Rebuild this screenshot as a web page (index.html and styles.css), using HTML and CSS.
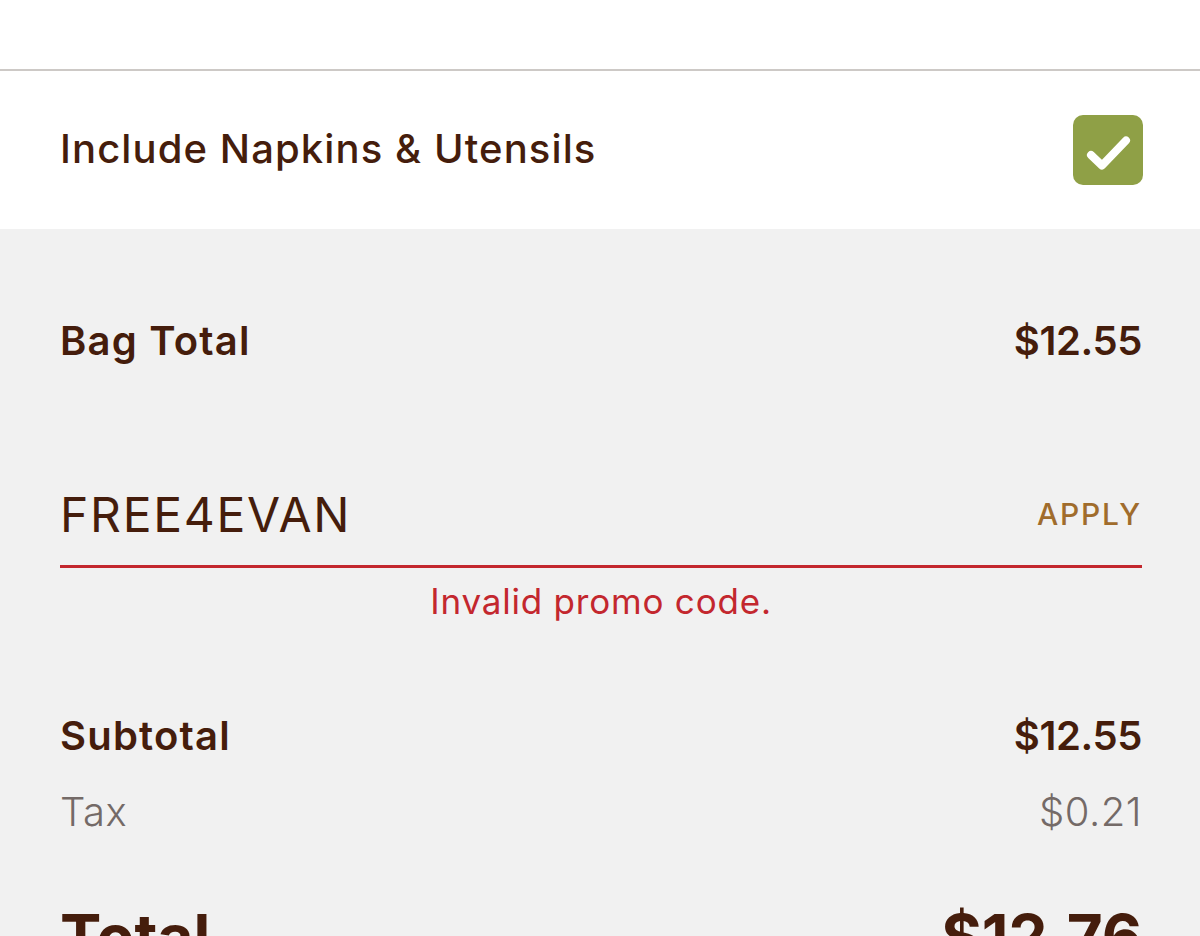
FILE: index.html
```html
<!DOCTYPE html>
<html>
<head>
<meta charset="utf-8">
<link rel="stylesheet" href="styles.css">
</head>
<body>
<div class="page">
  <div class="topbar"></div>
  <div class="napkins">
    <span class="napkins-label">Include Napkins &amp; Utensils</span>
    <span class="checkbox">
      <svg width="70" height="70" viewBox="0 0 70 70"><rect x="0" y="0" width="70" height="70" rx="10" fill="#8fa046"/><path d="M18 40 L29 50.5 L53 25.5" fill="none" stroke="#fff" stroke-width="8" stroke-linecap="round" stroke-linejoin="round"/></svg>
    </span>
  </div>
  <div class="summary">
    <div class="row bag">
      <span class="strong">Bag Total</span>
      <span class="strong price">$12.55</span>
    </div>
    <div class="promo">
      <div class="promo-field">
        <span class="promo-code">FREE4EVAN</span>
        <span class="apply">APPLY</span>
      </div>
      <div class="promo-error">Invalid promo code.</div>
    </div>
    <div class="row sub">
      <span class="strong">Subtotal</span>
      <span class="strong price">$12.55</span>
    </div>
    <div class="row tax">
      <span class="light">Tax</span>
      <span class="light">$0.21</span>
    </div>
    <div class="row total">
      <span class="big">Total</span>
      <span class="big">$12.76</span>
    </div>
  </div>
</div>
</body>
</html>
```

FILE: styles.css
```css
html, body {
  margin: 0;
  padding: 0;
  background: #f1f1f1;
}
body {
  font-family: "Inter", "Liberation Sans", sans-serif;
  color: #451d0c;
  overflow: hidden;
  height: 936px;
}
.page {
  width: 1200px;
}
.topbar {
  height: 69px;
  background: #fff;
  border-bottom: 2px solid #cdc9c6;
}
.napkins {
  height: 158px;
  background: #fff;
  display: flex;
  align-items: center;
  justify-content: space-between;
  padding: 0 57px 0 60px;
}
.napkins-label {
  font-size: 40px;
  font-weight: 550;
  line-height: 1;
  letter-spacing: 1.1px;
  margin-top: -3px;
}
.checkbox {
  display: flex;
  width: 70px;
  height: 70px;
}
.summary {
  padding: 0 58px 0 60px;
  background: #f1f1f1;
}
.row {
  display: flex;
  justify-content: space-between;
  align-items: center;
  line-height: 1;
}
.strong {
  font-size: 40px;
  font-weight: 580;
  letter-spacing: 1.2px;
}
.strong.price {
  letter-spacing: -0.4px;
}
.light {
  font-size: 40px;
  font-weight: 300;
  color: #746a67;
  letter-spacing: 0.5px;
}
.big {
  font-size: 62px;
  font-weight: 700;
}
.bag {
  padding-top: 92px;
}
.promo {
  margin-top: 130px;
}
.promo-field {
  display: flex;
  justify-content: space-between;
  align-items: center;
  border-bottom: 3px solid #c3272e;
  padding-bottom: 26px;
}
.promo-code {
  font-size: 48px;
  font-weight: 400;
  line-height: 1;
  letter-spacing: 1.7px;
}
.apply {
  font-size: 30px;
  font-weight: 500;
  line-height: 1;
  color: #a06c2c;
  letter-spacing: 1.8px;
  margin-top: -2px;
}
.promo-error {
  text-align: center;
  font-size: 35px;
  font-weight: 400;
  color: #c3272e;
  margin-top: 16px;
  line-height: 1;
  letter-spacing: 0.8px;
}
.sub {
  margin-top: 97px;
}
.tax {
  margin-top: 36px;
}
.total {
  margin-top: 74px;
}
```
